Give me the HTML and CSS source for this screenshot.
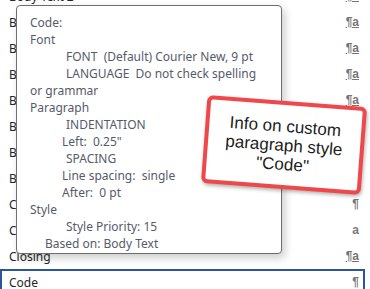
FILE: index.html
```html
<!DOCTYPE html>
<html lang="en">
	<head>
		<meta charset="utf-8">
		<title>Styles pane</title>
		<link rel="stylesheet" href="styles.css">
	</head>
	<body>
		<div class="list">
			<div class="row"><span>Body Text 2</span><span class="mark link">¶a</span></div>
			<div class="row"><span>Body Text 3</span><span class="mark link">¶a</span></div>
			<div class="row"><span>Body Text First Indent</span><span class="mark link">¶a</span></div>
			<div class="row"><span>Body Text First Indent 2</span><span class="mark link">¶a</span></div>
			<div class="row"><span>Body Text Indent</span><span class="mark link">¶a</span></div>
			<div class="row"><span>Body Text Indent 2</span><span class="mark link">¶a</span></div>
			<div class="row"><span>Body Text Indent 3</span><span class="mark link">¶a</span></div>
			<div class="row"><span>Book Title</span><span class="mark">a</span></div>
			<div class="row"><span>Caption</span><span class="mark">¶</span></div>
			<div class="row"><span>Char</span><span class="mark">a</span></div>
			<div class="row"><span>Closing</span><span class="mark link">¶a</span></div>
			<div class="row selected"><span>Code</span><span class="mark">¶</span></div>
		</div>

		<div class="tip">
			<div>Code:</div>
			<div>Font</div>
			<div class="in2">FONT&nbsp; (Default) Courier New, 9 pt</div>
			<div class="in2">LANGUAGE&nbsp; Do not check spelling</div>
			<div>or grammar</div>
			<div>Paragraph</div>
			<div class="in2">INDENTATION</div>
			<div class="in1">Left:&nbsp; 0.25"</div>
			<div class="in2">SPACING</div>
			<div class="in1">Line spacing:&nbsp; single</div>
			<div class="in1">After:&nbsp; 0 pt</div>
			<div>Style</div>
			<div class="in2">Style Priority: 15</div>
			<div class="in0">Based on: Body Text</div>
		</div>

		<div class="callout">Info on custom<br>paragraph style<br>"Code"</div>
	</body>
</html>
```
FILE: styles.css
```css
html, body{ margin: 0; padding: 0; }
body{ width: 370px; height: 289px; overflow: hidden; position: relative; background: #fff; font-family: "Noto Sans", "Open Sans", sans-serif; font-size: 12px; color: #262626; }

.list{ width: 365px; margin-top: -17px; }
.row{ box-sizing: border-box; height: 26px; display: flex; align-items: center; justify-content: space-between; padding: 0 6px 0 9px; white-space: nowrap; }
.row.selected{ border: 2px solid #2b579a; padding: 0 4px 0 7px; }
.mark{ font-family: "Liberation Sans", Arial, sans-serif; font-weight: bold; font-size: 12px; color: #767676; }
.mark.link{ text-decoration: underline; text-decoration-thickness: 1px; }

.tip{ position: absolute; left: 16px; top: 5px; width: 266px; height: 249px; box-sizing: border-box; padding: 8px 0 0 13px; background: #fff; border: 1px solid #6e6e6e; border-radius: 4px; box-shadow: 3px 4px 8px rgba(0,0,0,0.2); color: #555b6b; line-height: 17px; white-space: nowrap; }
.tip .in0{ padding-left: 15px; }
.tip .in1{ padding-left: 32px; }
.tip .in2{ padding-left: 36px; }

.callout{ position: absolute; left: 204px; top: 101px; width: 160px; height: 88px; box-sizing: border-box; border: 4px solid #f0474b; border-radius: 6px; background: #fff; box-shadow: 1px 2px 4px rgba(0,0,0,0.3); transform: rotate(4.3deg); display: flex; align-items: center; justify-content: center; text-align: center; font-family: "Liberation Sans", Arial, sans-serif; font-size: 17px; line-height: 19px; color: #1c1c1c; }
```
